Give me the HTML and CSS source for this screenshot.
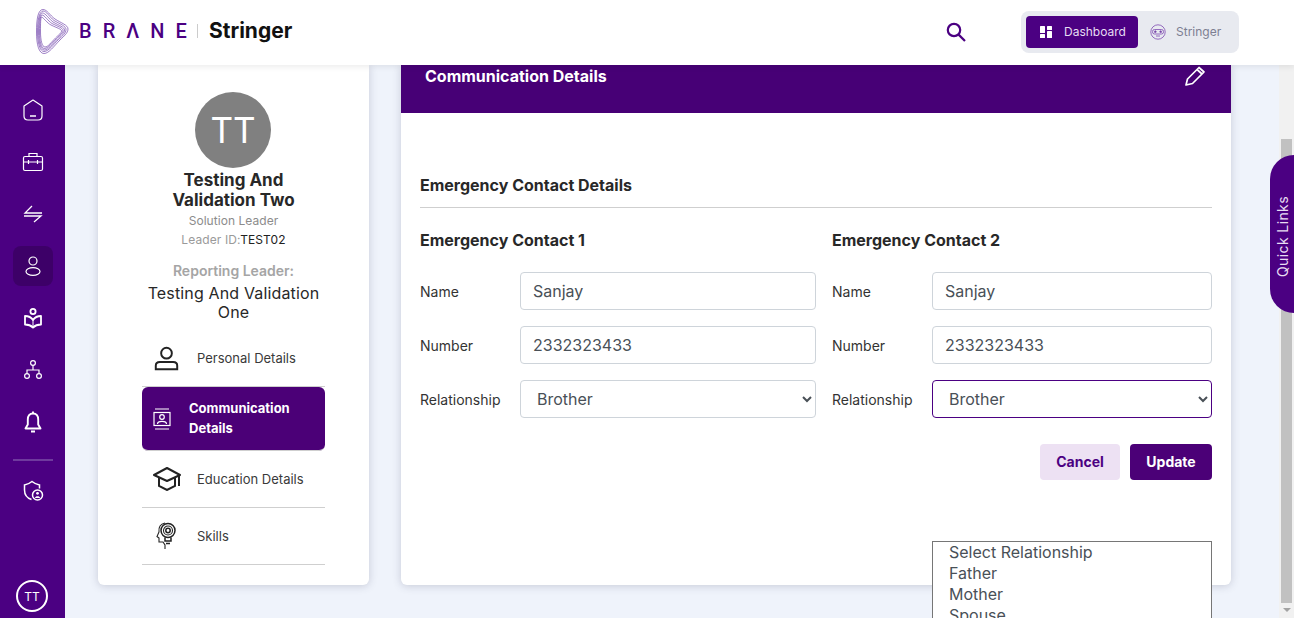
FILE: index.html
```html
<!DOCTYPE html>
<html>
<head>
    <title>Brane Stringer</title>
    <link rel="stylesheet" href="styles.css">
</head>
<body>
    <header class="topbar">
        <div class="logo">
            <svg class="logo-mark" width="33" height="45" viewBox="0 0 33 45" fill="none" stroke="#5d2aa0" stroke-width="0.6">
                <path d="M7 .5C2 .5 .5 10 .5 23C.5 36 3 44.500 8 44.500C13 44.500 18 37 24 31C28 27 32 24 32 20C32 16 25 14 19 10C14 6.500 11 .5 7 .5Z"/>
                <path d="M7 2C3 3 1.500 11 1.500 23C1.500 34 4 42.500 8 42.500C12.500 42.500 17 36 22.500 30.500C26.500 27 30 24 30 20.500C30 17 24 15 18 11.500C13.500 8 10.500 2 7 2Z"/>
                <path d="M6.500 4C3.500 5 2.500 12 2.500 23C2.500 33 4.500 41 8.500 41C12 41 16.500 35 21.500 30C25 26.500 28.500 24 28.500 21C28.500 18 23 16.500 17 13C13 10 9.500 4 6.500 4Z"/>
                <path d="M6 6C4 7 3.500 13 3.500 23C3.500 32 5 39.500 8.500 39.500C12 39.500 16 34 20.500 29.500C24 26 27 24 27 21.500C27 19 22 17.500 16 14.500C12 12 8.500 6 6 6Z"/>
                <path d="M5.500 8C4.500 9.500 4.500 14 4.500 23C4.500 31 6 38 9 38C12 38 15.500 33 19.500 29C23 25.500 25.500 24 25.500 22C25.500 20 21 19 15 16C11 14 7.500 8.500 5.500 8Z"/>
            </svg>
            <span class="logo-brane">BRΛNE</span>
            <span class="logo-sep"></span>
            <span class="logo-product">Stringer</span>
        </div>
        <svg class="search-icon" width="22" height="22" viewBox="0 0 22 22" fill="none" stroke="#4b0082" stroke-width="2.2">
            <circle cx="9" cy="9" r="6.2"/>
            <path d="M13.6 13.6L20 20"/>
        </svg>
        <div class="switcher">
            <div class="switch-item switch-active">
                <svg width="12" height="12" viewBox="0 0 12 12" fill="#fff">
                    <rect x="0" y="0" width="5" height="7" rx="0.5"/>
                    <rect x="7" y="0" width="5" height="4" rx="0.5"/>
                    <rect x="0" y="8" width="5" height="4" rx="0.5"/>
                    <rect x="7" y="5" width="5" height="7" rx="0.5"/>
                </svg>
                <span>Dashboard</span>
            </div>
            <div class="switch-item">
                <svg width="16" height="16" viewBox="0 0 16 16" fill="none" stroke="#8a5cb8" stroke-width="0.9">
                    <circle cx="8" cy="8" r="7.2"/>
                    <rect x="2.500" y="5.500" width="11" height="4.500" rx="2"/>
                    <circle cx="5.300" cy="7.700" r="0.900" fill="#6a3a9a"/>
                    <circle cx="10.700" cy="7.700" r="0.900" fill="#6a3a9a"/>
                    <path d="M6 12H10"/>
                </svg>
                <span>Stringer</span>
            </div>
        </div>
    </header>

    <div class="page">
        <nav class="sidebar">
            <a class="side-item">
                <svg width="24" height="24" viewBox="0 0 24 24" fill="none" stroke="#fff" stroke-width="1.2">
                    <path d="M12 2L21 8V18C21 20.500 19.500 22 17 22H7C4.500 22 3 20.500 3 18V8Z" stroke-linejoin="round"/>
                    <path d="M9 18H15" stroke-width="1.500"/>
                </svg>
            </a>
            <a class="side-item">
                <svg width="24" height="24" viewBox="0 0 24 24" fill="none" stroke="#fff" stroke-width="1.2">
                    <rect x="2.500" y="6.500" width="19" height="14" rx="1.500"/>
                    <path d="M8 6.500V3.500H16V6.500M2.500 12H21.500M7.500 10V14M16.500 10V14"/>
                </svg>
            </a>
            <a class="side-item">
                <svg width="24" height="24" viewBox="0 0 24 24" fill="none" stroke="#fff" stroke-width="1.3">
                    <path d="M11 4L4 11H21M13 20L20 14H3"/>
                </svg>
            </a>
            <a class="side-item side-active">
                <svg width="24" height="24" viewBox="0 0 24 24" fill="none" stroke="#fff" stroke-width="1.2">
                    <circle cx="12" cy="7" r="4"/>
                    <ellipse cx="12" cy="17.500" rx="7" ry="3.800"/>
                </svg>
            </a>
            <a class="side-item">
                <svg width="24" height="24" viewBox="0 0 24 24" fill="none" stroke="#fff" stroke-width="1.8">
                    <circle cx="12" cy="5.500" r="2.600"/>
                    <path d="M4 10C7 10 10 11 12 14C14 11 17 10 20 10V18.500C17 18.500 14 19.500 12 21.500C10 19.500 7 18.500 4 18.500Z" stroke-linejoin="round"/>
                    <path d="M12 14V21" stroke-width="1"/>
                </svg>
            </a>
            <a class="side-item">
                <svg width="24" height="24" viewBox="0 0 24 24" fill="none" stroke="#fff" stroke-width="1.2">
                    <circle cx="12" cy="5" r="2.400"/>
                    <circle cx="6" cy="18" r="2.400"/>
                    <circle cx="18" cy="18" r="2.400"/>
                    <path d="M12 7.500V12M6 15.500V12H18V15.500"/>
                </svg>
            </a>
            <a class="side-item">
                <svg width="24" height="24" viewBox="0 0 24 24" fill="none" stroke="#fff" stroke-width="1.9">
                    <path d="M12 3.500C8.500 3.500 6.800 6 6.800 9.500V14.500L4.500 18.500H19.500L17.200 14.500V9.500C17.200 6 15.500 3.500 12 3.500Z" stroke-linejoin="round"/>
                    <path d="M12 1.500V3.500M10 21.500H14"/>
                </svg>
            </a>
            <div class="side-divider"></div>
            <a class="side-item">
                <svg width="24" height="24" viewBox="0 0 24 24" fill="none" stroke="#fff" stroke-width="1.500">
                    <path d="M10.500 20.500C6 19 3.500 16 3.500 11V6C6.500 5.500 8.500 4.500 11 2.500C13.500 4.500 15.500 5.500 18.500 6V9.500"/>
                    <circle cx="16.500" cy="16" r="5" fill="#4b0082"/>
                    <circle cx="16.500" cy="14.300" r="1.400" fill="#fff" stroke="none"/>
                    <path d="M14 19C14 16.500 19 16.500 19 19Z" fill="#fff" stroke="none"/>
                </svg>
            </a>
            <div class="side-avatar">TT</div>
        </nav>

        <main class="content">
            <aside class="profile-card">
                <div class="avatar">TT</div>
                <div class="profile-name">Testing And Validation Two</div>
                <div class="profile-role">Solution Leader</div>
                <div class="profile-id">Leader ID:<span>TEST02</span></div>
                <div class="reporting-label">Reporting Leader:</div>
                <div class="reporting-name">Testing And Validation One</div>

                <ul class="profile-nav">
                    <li class="nav-row nav-personal">
                        <svg width="25" height="25" viewBox="0 0 28 28" fill="none" stroke="#222" stroke-width="2.200">
                            <circle cx="14" cy="8" r="6"/>
                            <path d="M2 26V22C2 19.500 4 18 6.500 18H21.500C24 18 26 19.500 26 22V26H2Z"/>
                        </svg>
                        <span>Personal Details</span>
                    </li>
                    <li class="nav-row nav-active">
                        <svg width="18" height="22" viewBox="0 0 18 22" fill="none" stroke="#fff" stroke-width="1.200">
                            <path d="M2 1H16M2 21H16"/>
                            <rect x="1" y="4.500" width="16" height="13"/>
                            <circle cx="9" cy="9" r="2.300"/>
                            <path d="M4.500 16C4.500 12.500 13.500 12.500 13.500 16"/>
                        </svg>
                        <span>Communication Details</span>
                    </li>
                    <li class="nav-row nav-edu">
                        <svg width="28" height="24" viewBox="0 0 28 24" fill="none" stroke="#222" stroke-width="2">
                            <path d="M14 1L1 8L14 14L27 8Z" stroke-linejoin="round"/>
                            <path d="M6 11V19L14 23L22 19V11M26 8V19"/>
                        </svg>
                        <span>Education Details</span>
                    </li>
                    <li class="nav-row nav-skills">
                        <svg width="22" height="28" viewBox="0 0 22 28" fill="none" stroke="#222" stroke-width="1.100">
                            <path d="M9 1C4 2 2.500 6 3 10L1 14.500L3 16V20H7L9 23V27"/>
                            <circle cx="12" cy="8.500" r="7" stroke-width="1.500"/>
                            <circle cx="12" cy="8.500" r="4.500"/>
                            <circle cx="12" cy="8.500" r="2.200" stroke-width="1.500"/>
                            <path d="M9 15.500V19H15V15.500M10 21.500H14" stroke-width="1.500"/>
                        </svg>
                        <span>Skills</span>
                    </li>
                </ul>
            </aside>

            <section class="detail-card">
                <div class="detail-head">
                    <h2>Communication Details</h2>
                    <svg width="22" height="22" viewBox="0 0 22 22" fill="none" stroke="#fff" stroke-width="1.700">
                        <path d="M2 20L3.500 14L15 2.500L20 7L8.500 18.500Z" stroke-linejoin="round"/>
                        <path d="M13 4.500L18 9"/>
                    </svg>
                </div>
                <div class="detail-body">
                    <h3 class="section-title">Emergency Contact Details</h3>
                    <div class="contact-grid">
                        <div class="contact-col">
                            <h4>Emergency Contact 1</h4>
                            <label class="field"><span>Name</span><input class="control" type="text" value="Sanjay"></label>
                            <label class="field"><span>Number</span><input class="control" type="text" value="2332323433"></label>
                            <label class="field"><span>Relationship</span>
                                <select class="control"><option>Brother</option></select>
                            </label>
                        </div>
                        <div class="contact-col">
                            <h4>Emergency Contact 2</h4>
                            <label class="field"><span>Name</span><input class="control" type="text" value="Sanjay"></label>
                            <label class="field"><span>Number</span><input class="control" type="text" value="2332323433"></label>
                            <label class="field"><span>Relationship</span>
                                <select class="control control-focus"><option>Brother</option></select>
                            </label>
                            <div class="option-list">
                                <div>Select Relationship</div>
                                <div>Father</div>
                                <div>Mother</div>
                                <div>Spouse</div>
                            </div>
                        </div>
                    </div>
                    <div class="form-actions">
                        <button type="button" class="btn btn-light">Cancel</button>
                        <button type="button" class="btn btn-dark">Update</button>
                    </div>
                </div>
            </section>
        </main>

        <div class="scrollbar">
            <div class="scroll-thumb"></div>
            <div class="scroll-arrow"></div>
        </div>
    </div>

    <div class="quick-links"><span>Quick Links</span></div>
</body>
</html>
```

FILE: styles.css
```css
* {
    box-sizing: border-box;
}

html, body {
    height: 618px;
    margin: 0;
    overflow: hidden;
}

body {
    font-family: Inter, "Noto Sans", sans-serif;
    background: #eff3fb;
    color: #212529;
    position: relative;
}

svg {
    flex: none;
}

.topbar {
    height: 65px;
    background: #fff;
    display: flex;
    align-items: center;
    padding: 0 0 2px 36px;
    box-shadow: 0 2px 6px rgba(0, 0, 0, 0.08);
    position: relative;
    z-index: 5;
}

.logo {
    display: flex;
    align-items: center;
    width: 900px;
    padding-bottom: 2px;
}

.logo-mark {
    margin: 2px 10px 0 0;
}

.logo-brane {
    font-family: Roboto, sans-serif;
    font-size: 20px;
    font-weight: 500;
    letter-spacing: 11px;
    color: #4b0082;
    width: 118px;
}

.logo-sep {
    width: 1px;
    height: 14px;
    background: #ccc;
    margin-right: 11px;
}

.logo-product {
    font-size: 21px;
    font-weight: 700;
    color: #111;
}

.search-icon {
    margin: 0 54px 0 9px;
}

.switcher {
    width: 218px;
    height: 42px;
    background: #e8eaf0;
    border-radius: 8px;
    padding: 5px;
    display: flex;
}

.switch-item {
    display: flex;
    align-items: center;
    font-size: 12px;
    color: #7d7f92;
    gap: 10px;
    padding-left: 12px;
}

.switch-active {
    width: 112px;
    background: #4b0082;
    color: #e6dcf3;
    border-radius: 4px;
    gap: 12px;
    padding-left: 14px;
}

.page {
    display: flex;
    height: 553px;
}

.sidebar {
    width: 65px;
    flex: none;
    background: #4b0082;
    display: flex;
    flex-direction: column;
    align-items: center;
    gap: 12px;
    padding: 25px 0 6px;
}

.side-item {
    width: 40px;
    height: 40px;
    flex: none;
    border-radius: 8px;
    display: flex;
    align-items: center;
    justify-content: center;
}

.side-active {
    background: #3d0068;
}

.side-divider {
    width: 40px;
    height: 2px;
    background: #6f3a9e;
    margin: 5px 0 -2px;
    flex: none;
}

.side-avatar {
    width: 32px;
    height: 32px;
    margin-top: auto;
    margin-right: 1px;
    border: 2px solid #fff;
    border-radius: 50%;
    color: #fff;
    font-size: 12px;
    display: flex;
    align-items: center;
    justify-content: center;
}

.content {
    flex: 1;
    display: flex;
    gap: 32px;
    padding: 0 48px 33px 33px;
    min-width: 0;
}

.profile-card {
    width: 271px;
    flex: none;
    background: #fff;
    border-radius: 0 0 6px 6px;
    box-shadow: 0 1px 8px rgba(60, 60, 90, 0.22);
    padding-top: 27px;
    text-align: center;
}

.avatar {
    width: 76px;
    height: 76px;
    margin: 0 0 2px 97px;
    border-radius: 50%;
    background: #808080;
    color: #fff;
    font-size: 35px;
    display: flex;
    align-items: center;
    justify-content: center;
}

.profile-name {
    width: 160px;
    margin: 0 auto;
    font-size: 17px;
    line-height: 20px;
    font-weight: 700;
    color: #282828;
}

.profile-role {
    font-size: 12px;
    letter-spacing: 0.05px;
    line-height: 19px;
    color: #8c8c8c;
    margin-top: 1px;
}

.profile-id {
    font-size: 12px;
    letter-spacing: 0.1px;
    line-height: 19px;
    color: #9a9a9a;
}

.profile-id span {
    color: #222;
}

.reporting-label {
    font-size: 14px;
    line-height: 20px;
    font-weight: 600;
    color: #a5a5a5;
    margin-top: 12px;
}

.reporting-name {
    width: 200px;
    margin: 3px auto 0;
    font-size: 16px;
    letter-spacing: 0.15px;
    line-height: 19px;
    color: #282828;
}

.profile-nav {
    list-style: none;
    margin: 14px 44px 0;
    padding: 0;
}

.nav-row {
    display: flex;
    align-items: center;
    text-align: left;
    font-size: 13px;
    color: #3a3a3a;
    border-bottom: 1px solid #cfcfcf;
}

.nav-personal {
    height: 51px;
    padding: 0 0 6px 12px;
    gap: 18px;
}

.nav-active {
    height: 64px;
    background: #4b0077;
    color: #fff;
    font-weight: 700;
    line-height: 20px;
    border-radius: 6px;
    padding: 0 20px 2px 11px;
    gap: 18px;
}

.nav-active svg {
    margin-top: 2px;
}

.nav-edu {
    height: 57px;
    padding-left: 11px;
    gap: 16px;
}

.nav-skills {
    height: 57px;
    padding-left: 14px;
    gap: 19px;
}

.detail-card {
    flex: 1;
    min-width: 0;
    background: #fff;
    border-radius: 0 0 6px 6px;
    box-shadow: 0 1px 8px rgba(60, 60, 90, 0.22);
}

.detail-head {
    height: 48px;
    background: #470076;
    color: #fff;
    display: flex;
    justify-content: space-between;
    padding: 0 25px 0 24px;
}

.detail-head h2 {
    margin: 0;
    font-size: 16px;
    line-height: 22px;
    font-weight: 700;
}

.detail-body {
    padding: 62px 19px 0;
}

.section-title {
    margin: 0;
    font-size: 16px;
    line-height: 20px;
    font-weight: 700;
    color: #282828;
    padding-bottom: 12px;
    border-bottom: 1px solid #cfcfcf;
}

.contact-grid {
    display: grid;
    grid-template-columns: 396px 380px;
    gap: 16px;
}

.contact-col {
    position: relative;
}

.contact-col h4 {
    margin: 22px 0 22px;
    font-size: 16px;
    line-height: 20px;
    font-weight: 700;
    color: #282828;
}

.field {
    display: flex;
    align-items: center;
    margin-bottom: 16px;
    font-size: 14px;
    color: #333;
}

.field span {
    width: 100px;
    flex: none;
}

.control {
    flex: 1;
    min-width: 0;
    height: 38px;
    padding: 6px 12px;
    background: #fff;
    border: 1px solid #ced4da;
    border-radius: 4px;
    font-family: Inter, sans-serif;
    font-size: 16px;
    color: #495057;
}

.control-focus {
    border-color: #4b0082;
}

.option-list {
    position: absolute;
    left: 100px;
    right: 0;
    top: 333px;
    height: 90px;
    background: #fff;
    border: 1px solid #767676;
    padding-left: 16px;
    font-size: 16px;
    line-height: 21px;
    color: #495057;
}

.form-actions {
    display: flex;
    justify-content: flex-end;
    gap: 10px;
    margin-top: 10px;
}

.btn {
    height: 36px;
    padding: 0 0 1px;
    border: none;
    border-radius: 4px;
    font-family: Inter, sans-serif;
    font-size: 14px;
    font-weight: 700;
}

.btn-light {
    width: 80px;
    background: #ede1f3;
    color: #4b0082;
}

.btn-dark {
    width: 82px;
    background: #4b0077;
    color: #fff;
}

.scrollbar {
    width: 15px;
    flex: none;
    background: #f1f1f1;
    padding: 74px 2px 0;
    display: flex;
    flex-direction: column;
    align-items: center;
}

.scroll-thumb {
    width: 11px;
    height: 464px;
    background: #c1c1c1;
}

.scroll-arrow {
    width: 0;
    height: 0;
    margin-top: 5px;
    border-left: 4px solid transparent;
    border-right: 4px solid transparent;
    border-top: 4px solid #a3a3a3;
}

.quick-links {
    position: absolute;
    top: 155px;
    right: 0;
    width: 24px;
    height: 158px;
    padding-top: 6px;
    background: #4b0082;
    border-radius: 24px 0 0 24px;
    color: #e8def3;
    display: flex;
    align-items: center;
    justify-content: center;
    z-index: 6;
}

.quick-links span {
    writing-mode: vertical-rl;
    transform: rotate(180deg);
    font-size: 14px;
    letter-spacing: 0.4px;
}
```
